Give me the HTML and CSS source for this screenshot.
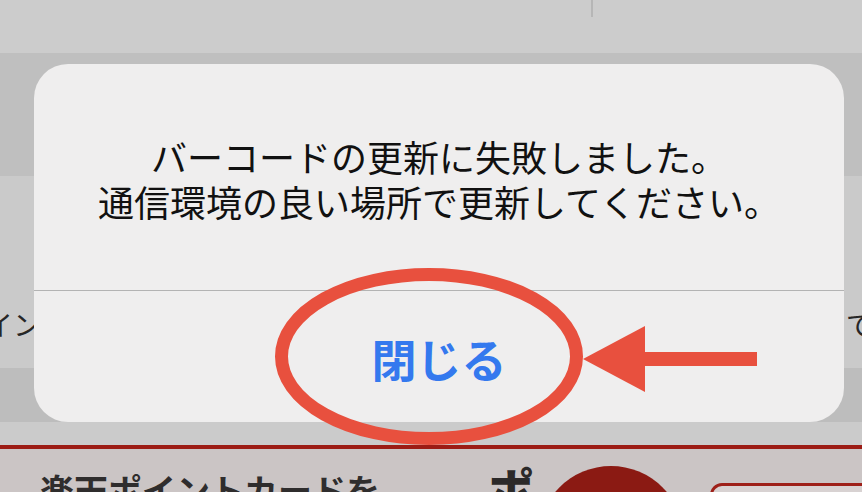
FILE: index.html
```html
<!DOCTYPE html>
<html lang="ja">
<head>
<meta charset="utf-8">
<title>バーコードの更新に失敗しました</title>
<link rel="stylesheet" href="styles.css">
</head>
<body>
<div class="screen">
  <div class="topbar">
    <div class="tab"></div>
    <div class="tab-divider"></div>
  </div>
  <div class="band band--tall"></div>
  <div class="row">
    <span class="row-left">イン</span>
    <span class="row-right">で</span>
  </div>
  <div class="band band--short"></div>
  <div class="strip"></div>
  <div class="card">
    <span class="card-title">楽天ポイントカードを</span>
    <span class="card-po">ポ</span>
    <span class="card-circle"></span>
    <span class="card-button"><span class="card-button-text">表示</span></span>
  </div>

  <div class="alert">
    <div class="alert-message">
      <p class="alert-line">バーコードの更新に失敗しました。</p>
      <p class="alert-line">通信環境の良い場所で更新してください。</p>
    </div>
    <div class="alert-divider"></div>
    <div class="alert-action">閉じる</div>
  </div>

  <svg class="annotation" width="862" height="492" viewBox="0 0 862 492">
    <ellipse cx="429" cy="356.5" rx="147.5" ry="82" fill="none" stroke="#e8503e" stroke-width="13"/>
    <polygon points="583,359 645,326 645,392" fill="#e8503e"/>
    <rect x="643" y="352" width="114" height="14" fill="#e8503e"/>
  </svg>
</div>
</body>
</html>
```

FILE: styles.css
```css
html, body {
  margin: 0;
  padding: 0;
}

body {
  width: 862px;
  height: 492px;
  overflow: hidden;
  background: #cbcbcb;
  font-family: "Noto Sans CJK JP", "Noto Sans", sans-serif;
}

.screen {
  position: relative;
  width: 862px;
  height: 492px;
  overflow: hidden;
  display: flex;
  flex-direction: column;
}

.topbar {
  height: 53px;
  flex: none;
  background: #cccccc;
  display: flex;
  align-items: flex-start;
}

.tab {
  width: 591px;
}

.tab-divider {
  width: 2px;
  height: 17px;
  background: #b6b6b6;
}

.band {
  flex: none;
  background: #bfbfbf;
}

.band--tall {
  height: 123px;
}

.band--short {
  height: 54px;
  background: #bdbdbd;
}

.row {
  height: 192px;
  flex: none;
  background: #cacaca;
  display: flex;
  align-items: flex-start;
  justify-content: space-between;
  color: #262626;
  font-size: 28px;
  line-height: 36px;
  padding-top: 130px;
  box-sizing: border-box;
}

.row-left {
  margin-left: -15px;
}

.row-right {
  margin-right: -12px;
}

.strip {
  height: 23px;
  flex: none;
  background: #cbcbcb;
}

.card {
  flex: 1;
  border-top: 4px solid #9c1c15;
  background: #cbc5c5;
  display: flex;
  align-items: flex-start;
  padding-left: 40px;
  overflow: hidden;
}

.card-title {
  margin-top: 21px;
  font-size: 34px;
  line-height: 40px;
  font-weight: 700;
  color: #2f2d2d;
  white-space: nowrap;
  width: 340px;
}

.card-po {
  margin-left: 108px;
  margin-top: 13px;
  font-size: 46px;
  line-height: 50px;
  font-weight: 900;
  color: #2b2929;
}

.card-circle {
  flex: none;
  margin-left: 4px;
  margin-top: 17px;
  width: 146px;
  height: 146px;
  border-radius: 50%;
  background: #8b1a13;
}

.card-button {
  flex: none;
  margin-left: 26px;
  margin-top: 34px;
  width: 200px;
  height: 60px;
  box-sizing: border-box;
  border: 3px solid #9e2019;
  border-radius: 12px;
  background: #d8d2d2;
  padding: 6px 0 0 24px;
}

.card-button-text {
  font-size: 24px;
  color: #9a9696;
}

.alert {
  position: absolute;
  left: 34px;
  top: 64px;
  width: 810px;
  height: 358px;
  border-radius: 34px;
  background: #efeeee;
  display: flex;
  flex-direction: column;
  overflow: hidden;
}

.alert-message {
  height: 226px;
  flex: none;
  box-sizing: border-box;
  padding-top: 70px;
  text-align: center;
  color: #111111;
  font-size: 36px;
  line-height: 45px;
}

.alert-line {
  margin: 0;
  white-space: nowrap;
}

.alert-divider {
  height: 1px;
  flex: none;
  background: #b3b3b3;
}

.alert-action {
  flex: 1;
  display: flex;
  align-items: center;
  justify-content: center;
  padding-top: 4px;
  font-size: 45px;
  font-weight: 700;
  color: #3479ee;
}

.annotation {
  position: absolute;
  left: 0;
  top: 0;
  pointer-events: none;
}
```
